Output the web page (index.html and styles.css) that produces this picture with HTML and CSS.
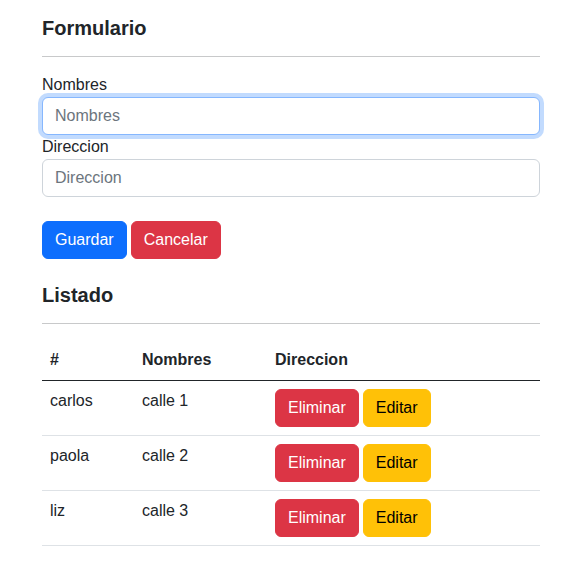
FILE: index.html
```html
<!DOCTYPE html>
<html lang="es">
<head>
<meta charset="utf-8">
<title>Formulario</title>
<link rel="stylesheet" href="styles.css">
</head>
<body>
<main class="page">
  <section class="form-section">
    <h5 class="title">Formulario</h5>
    <hr class="rule">
    <div class="field">
      <label class="label" for="nombres">Nombres</label>
      <input class="input input-focus" id="nombres" type="text" placeholder="Nombres">
    </div>
    <div class="field">
      <label class="label" for="direccion">Direccion</label>
      <input class="input" id="direccion" type="text" placeholder="Direccion">
    </div>
    <div class="actions">
      <button class="btn btn-primary" type="button">Guardar</button>
      <button class="btn btn-danger" type="button">Cancelar</button>
    </div>
  </section>
  <section class="list-section">
    <h5 class="title">Listado</h5>
    <hr class="rule">
    <table class="table">
      <thead>
        <tr>
          <th class="c1">#</th>
          <th class="c2">Nombres</th>
          <th class="c3">Direccion</th>
        </tr>
      </thead>
      <tbody>
        <tr>
          <td>carlos</td>
          <td>calle 1</td>
          <td><div class="row-actions"><button class="btn btn-danger" type="button">Eliminar</button><button class="btn btn-warning" type="button">Editar</button></div></td>
        </tr>
        <tr>
          <td>paola</td>
          <td>calle 2</td>
          <td><div class="row-actions"><button class="btn btn-danger" type="button">Eliminar</button><button class="btn btn-warning" type="button">Editar</button></div></td>
        </tr>
        <tr>
          <td>liz</td>
          <td>calle 3</td>
          <td><div class="row-actions"><button class="btn btn-danger" type="button">Eliminar</button><button class="btn btn-warning" type="button">Editar</button></div></td>
        </tr>
      </tbody>
    </table>
  </section>
</main>
</body>
</html>
```

FILE: styles.css
```css
* { box-sizing: border-box; }

html, body {
  margin: 0;
  padding: 0;
  background: #fff;
}

body {
  font-family: "Liberation Sans", Arial, sans-serif;
  font-size: 16px;
  line-height: 1.5;
  color: #212529;
}

.page {
  width: 498px;
  margin-left: 42px;
  padding-top: 16px;
}

.title {
  margin: 0;
  font-size: 20px;
  line-height: 24px;
  font-weight: 700;
  color: #212529;
}

.rule {
  margin: 16px 0;
  border: 0;
  border-top: 1px solid #c8c9ca;
  height: 0;
}

.field {
  display: flex;
  flex-direction: column;
}

.label {
  display: block;
  line-height: 24px;
}

.input {
  display: block;
  width: 100%;
  height: 38px;
  padding: 6px 12px;
  font-family: inherit;
  font-size: 16px;
  line-height: 24px;
  color: #212529;
  background: #fff;
  border: 1px solid #ced4da;
  border-radius: 6px;
  outline: none;
}

.input::placeholder {
  color: #6c757d;
  opacity: 1;
}

.input-focus {
  border-color: #86b7fe;
  box-shadow: 0 0 0 4px rgba(13, 110, 253, 0.25);
}

.actions {
  display: flex;
  gap: 4px;
  margin-top: 24px;
  margin-bottom: 24px;
}

.btn {
  display: inline-block;
  height: 38px;
  padding: 6px 12px;
  font-family: inherit;
  font-size: 16px;
  line-height: 24px;
  border: 1px solid transparent;
  border-radius: 6px;
  cursor: pointer;
}

.btn-primary {
  background: #0d6efd;
  border-color: #0d6efd;
  color: #fff;
}

.btn-danger {
  background: #dc3545;
  border-color: #dc3545;
  color: #fff;
}

.btn-warning {
  background: #ffc107;
  border-color: #ffc107;
  color: #000;
}

.table {
  width: 100%;
  border-collapse: collapse;
  vertical-align: top;
}

.table th,
.table td {
  padding: 8px;
  text-align: left;
  vertical-align: top;
  line-height: 24px;
}

.table th {
  font-weight: 700;
  border-bottom: 1px solid #212529;
}

.table td {
  border-bottom: 1px solid #dee2e6;
}

.c1 { width: 92px; }
.c2 { width: 133px; }

.row-actions {
  display: flex;
  gap: 4px;
}
```
